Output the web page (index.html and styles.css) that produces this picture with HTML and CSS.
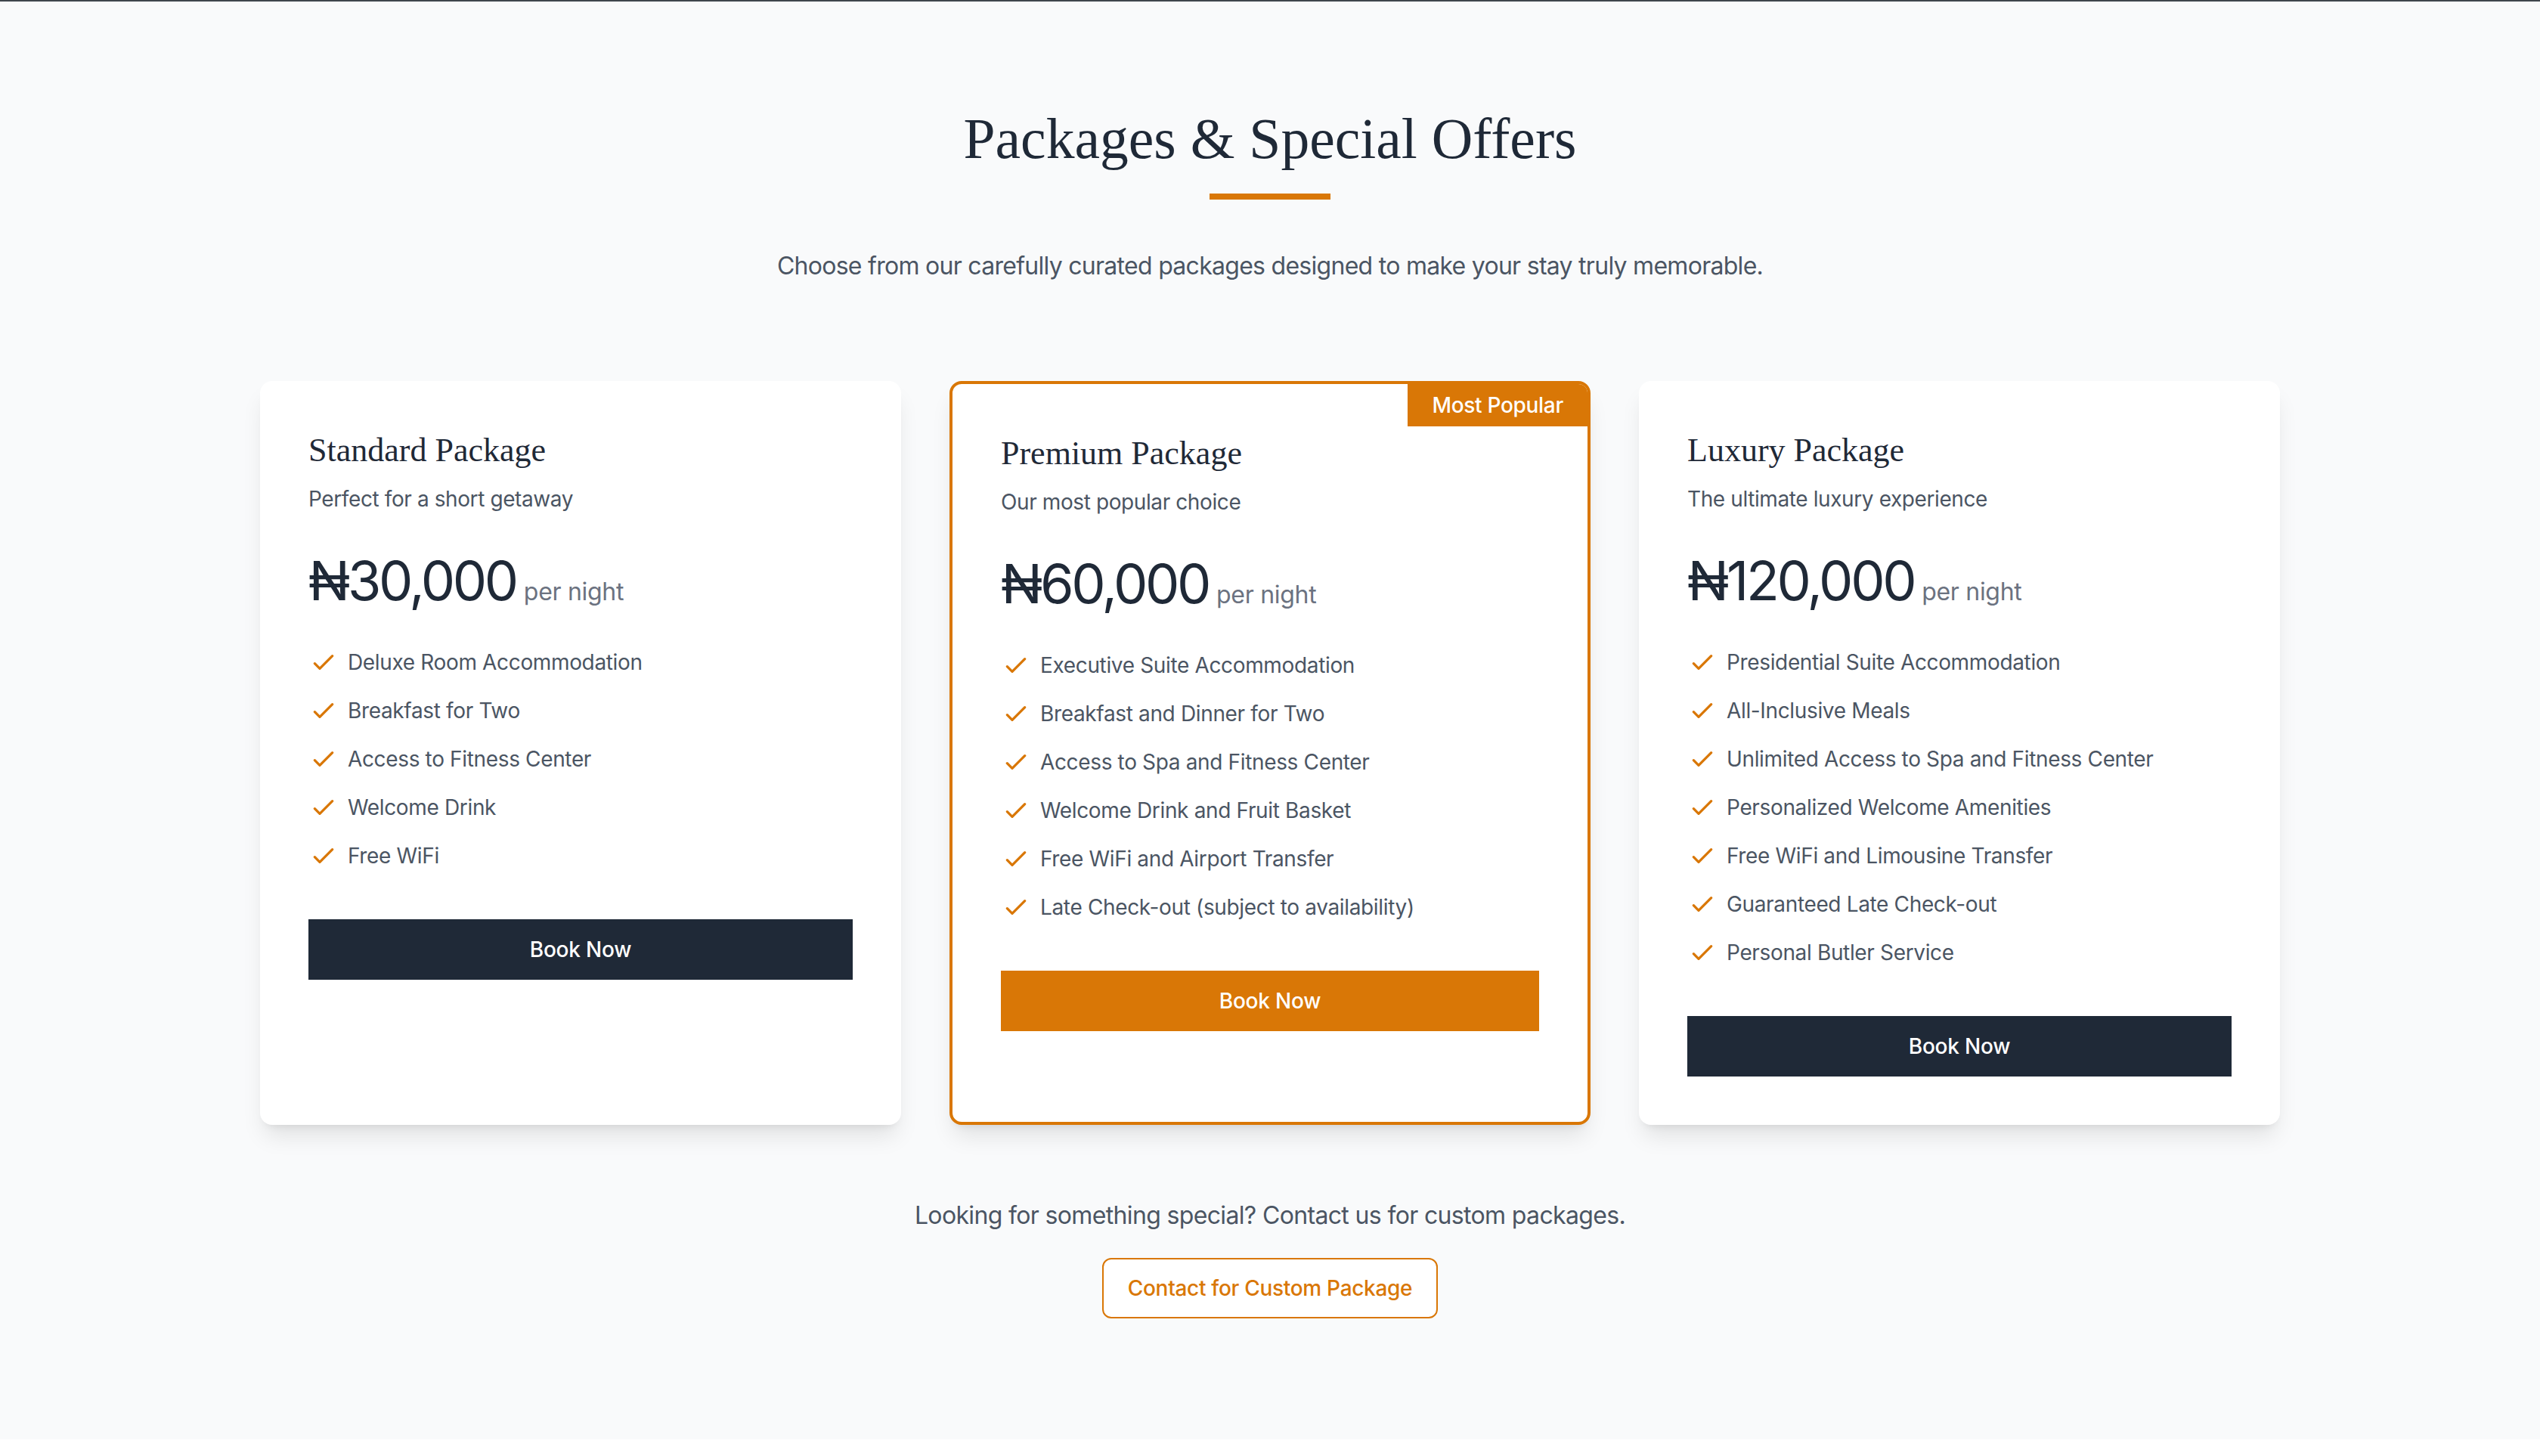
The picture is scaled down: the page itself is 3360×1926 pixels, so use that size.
FILE: index.html
```html
<!DOCTYPE html>
<html lang="en">
<head>
<meta charset="utf-8">
<title>Packages &amp; Special Offers</title>
<link rel="stylesheet" href="styles.css">
</head>
<body>
<div class="topline"></div>
<section class="packages">
  <header class="intro">
    <h2 class="heading">Packages &amp; Special Offers</h2>
    <div class="rule"></div>
    <p class="lead">Choose from our carefully curated packages designed to make your stay truly memorable.</p>
  </header>

  <div class="grid">
    <article class="card">
      <h3 class="card-title">Standard Package</h3>
      <p class="card-sub">Perfect for a short getaway</p>
      <div class="price-row"><span class="price">₦30,000</span><span class="unit">per night</span></div>
      <ul class="features">
        <li><svg class="check" viewBox="0 0 24 24"><path d="M5 13l4 4L19 7"/></svg><span>Deluxe Room Accommodation</span></li>
        <li><svg class="check" viewBox="0 0 24 24"><path d="M5 13l4 4L19 7"/></svg><span>Breakfast for Two</span></li>
        <li><svg class="check" viewBox="0 0 24 24"><path d="M5 13l4 4L19 7"/></svg><span>Access to Fitness Center</span></li>
        <li><svg class="check" viewBox="0 0 24 24"><path d="M5 13l4 4L19 7"/></svg><span>Welcome Drink</span></li>
        <li><svg class="check" viewBox="0 0 24 24"><path d="M5 13l4 4L19 7"/></svg><span>Free WiFi</span></li>
      </ul>
      <a class="btn btn-dark" href="#">Book Now</a>
    </article>

    <article class="card card-featured">
      <div class="badge">Most Popular</div>
      <h3 class="card-title">Premium Package</h3>
      <p class="card-sub">Our most popular choice</p>
      <div class="price-row"><span class="price">₦60,000</span><span class="unit">per night</span></div>
      <ul class="features">
        <li><svg class="check" viewBox="0 0 24 24"><path d="M5 13l4 4L19 7"/></svg><span>Executive Suite Accommodation</span></li>
        <li><svg class="check" viewBox="0 0 24 24"><path d="M5 13l4 4L19 7"/></svg><span>Breakfast and Dinner for Two</span></li>
        <li><svg class="check" viewBox="0 0 24 24"><path d="M5 13l4 4L19 7"/></svg><span>Access to Spa and Fitness Center</span></li>
        <li><svg class="check" viewBox="0 0 24 24"><path d="M5 13l4 4L19 7"/></svg><span>Welcome Drink and Fruit Basket</span></li>
        <li><svg class="check" viewBox="0 0 24 24"><path d="M5 13l4 4L19 7"/></svg><span>Free WiFi and Airport Transfer</span></li>
        <li><svg class="check" viewBox="0 0 24 24"><path d="M5 13l4 4L19 7"/></svg><span>Late Check-out (subject to availability)</span></li>
      </ul>
      <a class="btn btn-orange" href="#">Book Now</a>
    </article>

    <article class="card">
      <h3 class="card-title">Luxury Package</h3>
      <p class="card-sub">The ultimate luxury experience</p>
      <div class="price-row"><span class="price">₦120,000</span><span class="unit">per night</span></div>
      <ul class="features">
        <li><svg class="check" viewBox="0 0 24 24"><path d="M5 13l4 4L19 7"/></svg><span>Presidential Suite Accommodation</span></li>
        <li><svg class="check" viewBox="0 0 24 24"><path d="M5 13l4 4L19 7"/></svg><span>All-Inclusive Meals</span></li>
        <li><svg class="check" viewBox="0 0 24 24"><path d="M5 13l4 4L19 7"/></svg><span>Unlimited Access to Spa and Fitness Center</span></li>
        <li><svg class="check" viewBox="0 0 24 24"><path d="M5 13l4 4L19 7"/></svg><span>Personalized Welcome Amenities</span></li>
        <li><svg class="check" viewBox="0 0 24 24"><path d="M5 13l4 4L19 7"/></svg><span>Free WiFi and Limousine Transfer</span></li>
        <li><svg class="check" viewBox="0 0 24 24"><path d="M5 13l4 4L19 7"/></svg><span>Guaranteed Late Check-out</span></li>
        <li><svg class="check" viewBox="0 0 24 24"><path d="M5 13l4 4L19 7"/></svg><span>Personal Butler Service</span></li>
      </ul>
      <a class="btn btn-dark" href="#">Book Now</a>
    </article>
  </div>

  <footer class="custom">
    <p class="custom-text">Looking for something special? Contact us for custom packages.</p>
    <a class="btn-outline" href="#">Contact for Custom Package</a>
  </footer>
</section>
</body>
</html>
```

FILE: styles.css
```css
* { box-sizing: border-box; }
html, body { margin: 0; padding: 0; background: #ffffff; }
body {
  font-family: Inter, "Noto Sans", "Liberation Sans", sans-serif;
  color: #1f2937;
}
.topline { height: 2px; background: #3f454c; }

.packages {
  background: #f9fafb;
  padding: 142px 0 160px;
}

.intro { text-align: center; }
.heading {
  margin: 0;
  font-family: "Liberation Serif", "DejaVu Serif", serif;
  font-weight: 400;
  font-size: 75.6px;
  line-height: 80px;
  color: #1f2937;
}
.rule {
  width: 160px;
  height: 8px;
  background: #d97706;
  margin: 32px auto 64px;
}
.lead {
  margin: 0;
  font-size: 32px;
  line-height: 48px;
  letter-spacing: -0.72px;
  color: #4b5563;
}

.grid {
  width: 2672px;
  margin: 128px auto 0;
  display: grid;
  grid-template-columns: repeat(3, 1fr);
  gap: 64px;
}

.card {
  position: relative;
  background: #ffffff;
  border-radius: 16px;
  padding: 64px;
  box-shadow: 0 20px 30px -6px rgba(0,0,0,0.10), 0 8px 12px -8px rgba(0,0,0,0.10);
  display: flex;
  flex-direction: column;
  align-items: stretch;
}
.card-featured {
  border: 4px solid #d97706;
}
.badge {
  position: absolute;
  top: 0;
  right: 0;
  background: #d97706;
  color: #ffffff;
  font-size: 28px;
  line-height: 40px;
  font-weight: 500;
  letter-spacing: -0.3px;
  padding: 8px 32px;
  border-top-right-radius: 12px;
}

.card-title {
  margin: 0;
  font-family: "Liberation Serif", "DejaVu Serif", serif;
  font-weight: 400;
  font-size: 44px;
  line-height: 56px;
  color: #1f2937;
}
.card-sub {
  margin: 16px 0 0;
  font-size: 28px;
  line-height: 40px;
  letter-spacing: -0.4px;
  color: #4b5563;
}
.price-row {
  margin-top: 48px;
  display: flex;
  align-items: baseline;
}
.price {
  font-size: 72px;
  line-height: 80px;
  font-weight: 400;
  color: #1f2937;
  letter-spacing: -3.4px;
}
.unit {
  margin-left: 10px;
  font-size: 32px;
  line-height: 48px;
  letter-spacing: -0.3px;
  color: #6b7280;
}

.features {
  list-style: none;
  margin: 48px 0 64px;
  padding: 0;
  display: flex;
  flex-direction: column;
  gap: 24px;
}
.features li {
  display: flex;
  align-items: center;
  gap: 12px;
  font-size: 28px;
  line-height: 40px;
  letter-spacing: -0.35px;
  color: #4b5563;
}
.check {
  width: 40px;
  height: 40px;
  flex: none;
  fill: none;
  stroke: #d97706;
  stroke-width: 2;
  stroke-linecap: round;
  stroke-linejoin: round;
}

.btn {
  display: block;
  text-align: center;
  text-decoration: none;
  color: #ffffff;
  font-size: 28px;
  line-height: 40px;
  font-weight: 500;
  letter-spacing: -0.2px;
  padding: 20px 32px;
}
.btn-dark { background: #1f2937; }
.btn-orange { background: #d97706; }

.custom {
  margin-top: 96px;
  text-align: center;
}
.custom-text {
  margin: 0 0 32px;
  font-size: 32px;
  line-height: 48px;
  letter-spacing: -0.65px;
  color: #4b5563;
}
.btn-outline {
  display: inline-block;
  text-decoration: none;
  background: #ffffff;
  color: #d97706;
  border: 2px solid #d97706;
  border-radius: 12px;
  font-size: 28px;
  line-height: 40px;
  font-weight: 500;
  letter-spacing: -0.3px;
  padding: 18px 32px;
}
```
